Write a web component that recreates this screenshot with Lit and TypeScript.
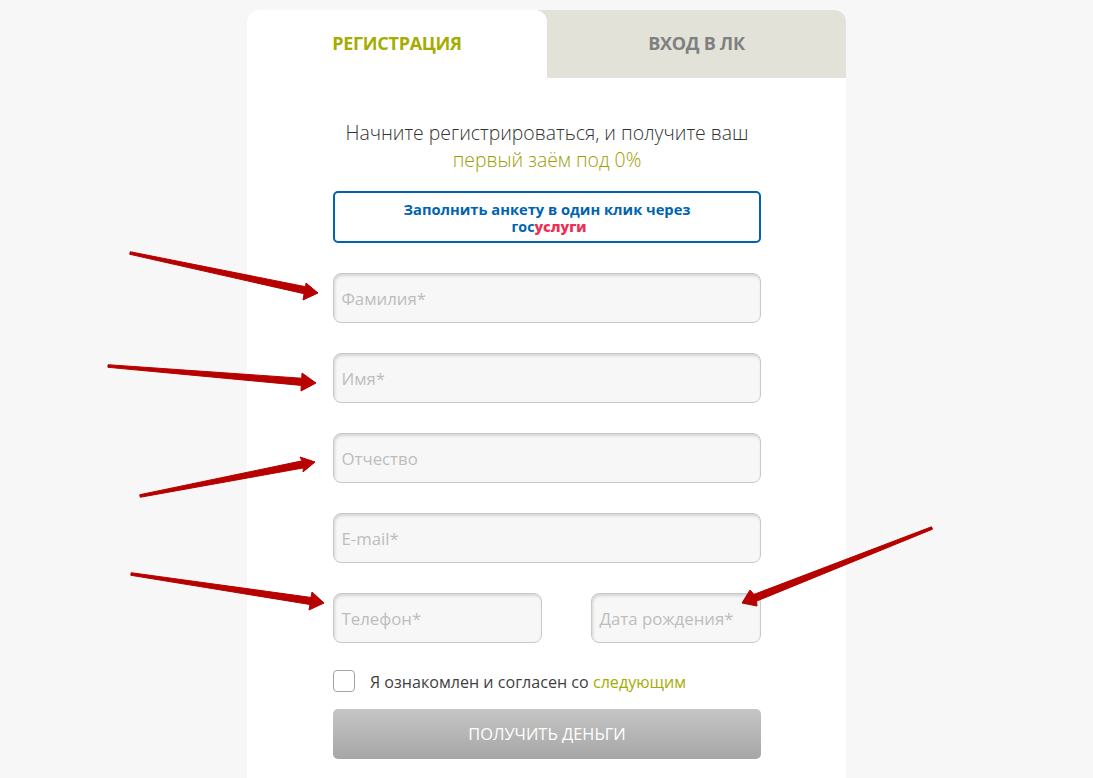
import { LitElement, html, css, svg } from "lit";
import { customElement } from "lit/decorators.js";

// annotation arrows drawn over the form: tail, tip, and the two head corners
const ARROWS = [
	{ tail: [130, 253], tip: [318, 293], a: [306, 283], b: [303, 300] },
	{ tail: [108, 366], tip: [316, 383], a: [302, 373], b: [301, 391] },
	{ tail: [140, 496], tip: [315, 462], a: [300, 457], b: [303, 472] },
	{ tail: [131, 574], tip: [324, 603], a: [312, 592], b: [309, 610] },
	{ tail: [932, 528], tip: [742, 603], a: [750, 590], b: [757, 606] },
];

function arrowPoints({ tail, tip, a, b }: { tail: number[]; tip: number[]; a: number[]; b: number[] }) {
	const dx = tip[0] - tail[0];
	const dy = tip[1] - tail[1];
	const len = Math.hypot(dx, dy);
	// normal pointing to the side of head corner a, so the outline never twists
	const sign = (a[0] - tail[0]) * -dy + (a[1] - tail[1]) * dx > 0 ? 1 : -1;
	const nx = (-dy / len) * sign;
	const ny = (dx / len) * sign;
	// shaft meets the head about 93% of the way along
	const mx = tail[0] + dx * 0.93;
	const my = tail[1] + dy * 0.93;
	const pts = [
		[tail[0] + nx * 1.3, tail[1] + ny * 1.3],
		[mx + nx * 3.6, my + ny * 3.6],
		a,
		tip,
		b,
		[mx - nx * 3.6, my - ny * 3.6],
		[tail[0] - nx * 1.3, tail[1] - ny * 1.3],
	];
	return pts.map((p) => p.join(",")).join(" ");
}

@customElement("app-root")
export class AppRoot extends LitElement {
	static styles = css`
		:host {
			display: block;
			position: relative;
			height: 778px;
			overflow: hidden;
			background: #f7f7f7;
			font-family: "Open Sans", sans-serif;
			color: #3f3f3f;
		}

		.card {
			width: 599px;
			height: 768px;
			margin: 0 0 0 247px;
			position: relative;
			top: 10px;
			background: #fff;
			border-radius: 12px 12px 0 0;
		}

		.tabs {
			display: flex;
			height: 68px;
			background: #e2e2d9;
			border-radius: 12px 12px 0 0;
		}

		.tab {
			flex: 1;
			display: flex;
			align-items: center;
			justify-content: center;
			font-size: 18px;
			font-weight: 700;
			letter-spacing: -0.3px;
			color: #808080;
			padding-bottom: 2px;
			box-sizing: border-box;
		}

		.tab.active {
			flex: 0 0 300px;
			background: #fff;
			color: #a5ac00;
			border-radius: 12px 12px 0 0;
		}

		form {
			display: flex;
			flex-direction: column;
			padding: 41px 85px 0 86px;
		}

		.lead {
			font-size: 19.4px;
			font-weight: 300;
			line-height: 27px;
			text-align: center;
			color: #333;
		}

		.lead span {
			color: #99a000;
		}

		.agree a {
			color: #a5ac00;
		}

		.gos {
			height: 52px;
			margin: 18px 0 30px;
			padding-top: 2px;
			border: 2px solid #0063b0;
			border-radius: 5px;
			box-sizing: border-box;
			display: flex;
			flex-direction: column;
			align-items: center;
			justify-content: center;
			font-size: 14.7px;
			font-weight: 700;
			line-height: 18px;
			color: #0063b0;
			background: #fff;
		}

		.gos .logo {
			font-size: 14.2px;
			margin-left: 4px;
		}

		.gos b {
			color: #ee2f53;
		}

		.field {
			height: 50px;
			box-sizing: border-box;
			border: 1px solid #cacaca;
			border-radius: 8px;
			background: #f7f7f7;
			box-shadow: inset 1px 2px 3px rgba(0, 0, 0, 0.14);
			padding: 0 7.5px;
			display: flex;
			align-items: center;
			font-size: 16.8px;
			font-weight: 400;
			color: #bdbdbd;
			margin-bottom: 30px;
		}

		.pair {
			display: flex;
			justify-content: space-between;
		}

		.pair .phone {
			width: 209px;
		}

		.pair .birth {
			width: 170px;
		}

		.agree {
			display: flex;
			align-items: center;
			gap: 15px;
			height: 22px;
			margin-top: -3px;
			font-size: 16.1px;
			color: #3f3f3f;
		}

		.agree div:last-child {
			position: relative;
			top: 1px;
		}

		.box {
			width: 22px;
			height: 22px;
			box-sizing: border-box;
			border: 1px solid #a5a5a5;
			border-radius: 4px;
			background: #fff;
		}

		.submit {
			height: 50px;
			margin-top: 17px;
			padding-bottom: 2px;
			box-sizing: border-box;
			border-radius: 5px;
			background: linear-gradient(#c4c5c4, #a5a6a5);
			color: #fff;
			font-size: 16.4px;
			display: flex;
			align-items: center;
			justify-content: center;
		}

		.arrows {
			position: absolute;
			left: 0;
			top: 0;
			pointer-events: none;
		}

		.arrows polygon {
			fill: #b70000;
			stroke: #b70000;
			stroke-width: 1;
			stroke-linejoin: round;
		}
	`;

	render() {
		return html`
			<div class="card">
				<div class="tabs">
					<div class="tab active">РЕГИСТРАЦИЯ</div>
					<div class="tab">ВХОД В ЛК</div>
				</div>
				<form>
					<div class="lead">Начните регистрироваться, и получите ваш<br /><span>первый заём под 0%</span></div>
					<div class="gos">
						<div>Заполнить анкету в один клик через</div>
						<div class="logo">гос<b>услуги</b></div>
					</div>
					<div class="field">Фамилия*</div>
					<div class="field">Имя*</div>
					<div class="field">Отчество</div>
					<div class="field">E-mail*</div>
					<div class="pair">
						<div class="field phone">Телефон*</div>
						<div class="field birth">Дата рождения*</div>
					</div>
					<div class="agree">
						<div class="box"></div>
						<div>Я ознакомлен и согласен со <a>следующим</a></div>
					</div>
					<div class="submit">ПОЛУЧИТЬ ДЕНЬГИ</div>
				</form>
			</div>
			<svg class="arrows" width="1093" height="778" viewBox="0 0 1093 778">
				${ARROWS.map((a) => svg`<polygon points=${arrowPoints(a)}></polygon>`)}
			</svg>
		`;
	}
}
